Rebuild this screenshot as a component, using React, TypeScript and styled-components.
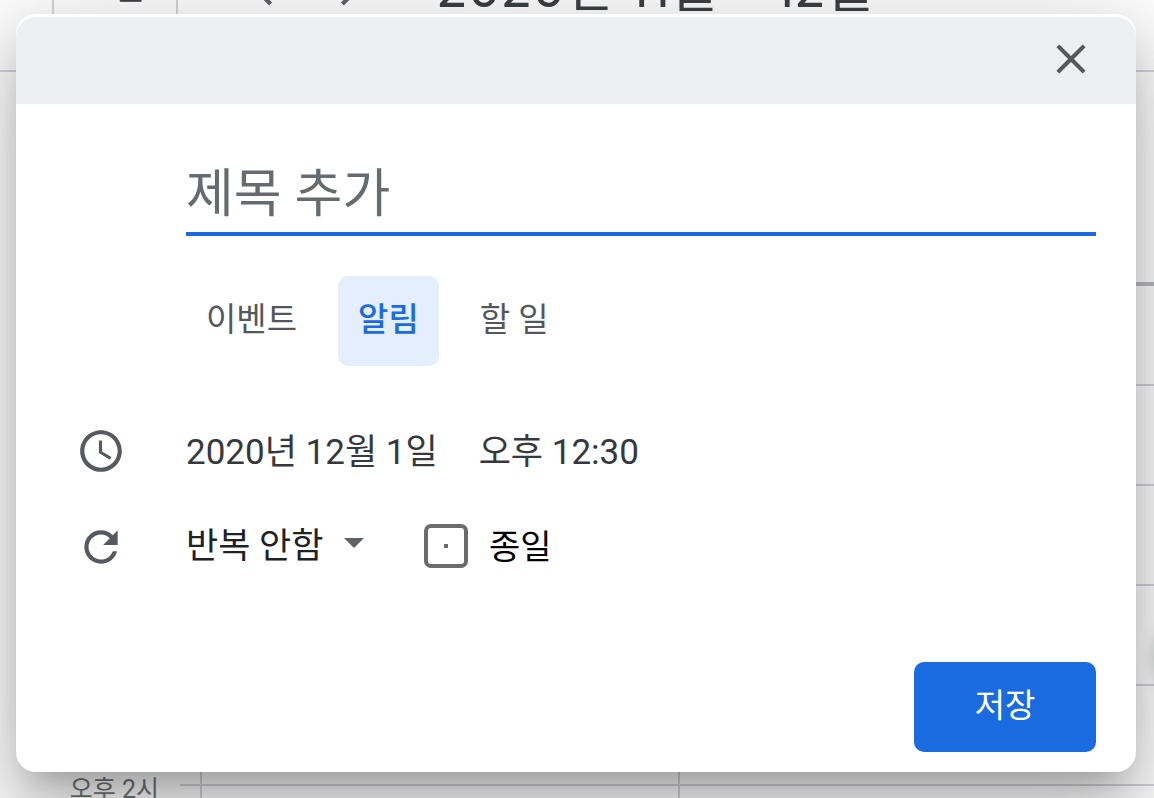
import React from "react";
import styled, { createGlobalStyle } from "styled-components";

const GlobalStyle = createGlobalStyle`
  *, *::before, *::after { box-sizing: border-box; }
  body {
    margin: 0;
    background: #fff;
    font-family: Roboto, "Noto Sans CJK KR", sans-serif;
  }
  button, input, select { font-family: inherit; }
`;

const Page = styled.div`
  position: relative;
  height: 100vh;
  overflow: hidden;
`;

/* ---------- calendar behind the dialog ---------- */

const Calendar = styled.main`
  margin-top: -96px;
`;

const CalendarHeader = styled.header`
  display: flex;
  align-items: center;
  height: 168px;
  padding-left: 52px;
  border-bottom: 2px solid #d3d5da;
  color: #3c4043;
`;

const TodayButton = styled.button`
  width: 126px;
  height: 90px;
  padding: 0 0 4px;
  border: 2px solid #d3d5da;
  border-radius: 10px;
  background: transparent;
  color: #3c4043;
  font-size: 33px;
  font-weight: 500;
`;

const NavButtons = styled.div`
  display: flex;
  gap: 33px;
  margin: 0 63px 0 62px;
  padding-top: 12px;
`;

const NavButton = styled.button`
  display: grid;
  place-items: center;
  width: 50px;
  height: 50px;
  padding: 0;
  border: 0;
  background: none;
  color: #5f6368;
`;

const Period = styled.h1`
  margin: 0;
  padding-top: 4px;
  font-family: Inter, "Noto Sans CJK KR", sans-serif;
  font-size: 52px;
  font-weight: 400;
  line-height: 72px;
  white-space: nowrap;
`;

const DayHeads = styled.div`
  height: 214px;
  margin-left: 180px;
  border-bottom: 4px solid #bbbcbf;
`;

const Hour = styled.div`
  display: grid;
  grid-template-columns: 180px 20px 478px 1fr;
  height: 100px;
`;

const HourLabel = styled.span`
  align-self: end;
  padding-right: 21px;
  color: #70757a;
  font-size: 25px;
  line-height: 32px;
  text-align: right;
  margin-bottom: -20px;
`;

const Slot = styled.div<{ $divided?: boolean }>`
  border-bottom: 2px solid #d3d5da;
  border-left: ${(p) => (p.$divided ? "2px solid #d3d5da" : "0")};
`;

const CreateButton = styled.button`
  position: absolute;
  top: 610px;
  right: -96px;
  width: 92px;
  height: 92px;
  border: 0;
  border-radius: 46px;
  background: #fff;
  box-shadow: 0 2px 16px rgba(60, 64, 67, 0.5);
`;

/* ---------- dialog ---------- */

const Dialog = styled.form`
  position: absolute;
  top: 14px;
  right: 18px;
  left: 16px;
  padding-top: 3px;
  border-radius: 20px;
  background: #fff;
  box-shadow:
    0 48px 76px 6px rgba(0, 0, 0, 0.15),
    0 18px 92px 16px rgba(0, 0, 0, 0.14),
    0 22px 30px -14px rgba(0, 0, 0, 0.2);
`;

const DialogBar = styled.div`
  display: flex;
  justify-content: flex-end;
  align-items: center;
  height: 87px;
  padding: 0 40px 4px 0;
  border-radius: 20px 20px 0 0;
  background: #ecf0f1;
`;

const CloseButton = styled.button`
  display: grid;
  place-items: center;
  width: 50px;
  height: 50px;
  padding: 0;
  border: 0;
  background: none;
  color: #55595d;
`;

const Row = styled.div`
  display: grid;
  grid-template-columns: 170px 1fr;
  align-items: center;
  min-height: 96px;
  padding-right: 40px;
`;

const TitleRow = styled(Row)`
  padding-top: 40px;
`;

const TabRow = styled(Row)`
  padding: 40px 40px 37px 0;
`;

const IconCell = styled.span`
  display: grid;
  place-items: center;
  color: #565a60;
`;

const TitleInput = styled.input`
  grid-column: 2;
  width: 100%;
  height: 92px;
  padding: 12px 0 0;
  border: 0;
  border-bottom: 4px solid #1b6be0;
  outline: 0;
  background: none;
  color: #3c4043;
  font-size: 52px;
  &::placeholder { color: #656b6f; opacity: 1; }
`;

const Tabs = styled.div`
  grid-column: 2;
  display: flex;
  gap: 21px;
`;

const Tab = styled.button<{ $active?: boolean }>`
  height: 90px;
  padding: 0 20px 8px;
  border: 0;
  border-radius: 10px;
  background: ${(p) => (p.$active ? "#e4eefd" : "transparent")};
  color: ${(p) => (p.$active ? "#1b6be0" : "#54585d")};
  font-size: 33px;
  font-weight: ${(p) => (p.$active ? 500 : 400)};
`;

const Fields = styled.div<{ $gap: number }>`
  display: flex;
  align-items: center;
  gap: ${(p) => p.$gap}px;
`;

const DateButton = styled.button`
  padding: 4px 0 0;
  border: 0;
  background: none;
  color: #35393d;
  font-size: 35px;
  line-height: 50px;
`;

const SelectBox = styled.label`
  position: relative;
  display: flex;
  align-items: center;
  color: #5f6368;
`;

const Select = styled.select`
  appearance: none;
  width: 178px;
  height: 60px;
  padding: 0 0 2px;
  border: 0;
  background: none;
  color: #202124;
  font-size: 35px;
`;

const Arrow = styled.svg`
  position: absolute;
  top: 21px;
  right: 0;
  pointer-events: none;
`;

const CheckLabel = styled.label`
  display: flex;
  align-items: flex-start;
  gap: 21px;
  color: #000;
  font-size: 34px;
  line-height: 46px;
`;

const Checkbox = styled.input`
  appearance: none;
  display: grid;
  place-items: center;
  width: 44px;
  height: 44px;
  margin: 0;
  border: 4px solid #6b6b6b;
  border-radius: 7px;
  &::before {
    content: "";
    width: 4px;
    height: 4px;
    background: #6b6b6b;
  }
`;

const Actions = styled.div`
  display: flex;
  justify-content: flex-end;
  padding: 67px 40px 20px;
`;

const SaveButton = styled.button`
  width: 182px;
  height: 90px;
  padding: 0 0 8px;
  border: 0;
  border-radius: 10px;
  background: #1b6be0;
  color: #fff;
  font-size: 33px;
`;

const Icon = ({ d, size = 50 }: { d: string; size?: number }) => (
  <svg width={size} height={size} viewBox="0 0 24 24" fill="currentColor" aria-hidden="true">
    <path d={d} />
  </svg>
);

const hours = ["오전 10시", "오전 11시", "오후 12시", "오후 1시", "오후 2시"];

export default function App() {
  return (
    <>
      <GlobalStyle />
      <Page>
        <Calendar>
          <CalendarHeader>
            <TodayButton type="button">오늘</TodayButton>
            <NavButtons>
              <NavButton type="button" aria-label="이전">
                <Icon d="M15.41 7.41 14 6l-6 6 6 6 1.41-1.41L10.83 12z" />
              </NavButton>
              <NavButton type="button" aria-label="다음">
                <Icon d="M10 6 8.59 7.41 13.17 12l-4.58 4.59L10 18l6-6z" />
              </NavButton>
            </NavButtons>
            <Period>2020년 11월 – 12월</Period>
          </CalendarHeader>
          <DayHeads />
          {hours.map((hour) => (
            <Hour key={hour}>
              <HourLabel>{hour}</HourLabel>
              <Slot />
              <Slot $divided />
              <Slot $divided />
            </Hour>
          ))}
          <Hour>
            <span />
            <Slot />
            <Slot $divided />
            <Slot $divided />
          </Hour>
        </Calendar>
        <CreateButton type="button" aria-label="만들기" />
        <Dialog onSubmit={(e) => e.preventDefault()}>
          <DialogBar>
            <CloseButton type="button" aria-label="닫기">
              <Icon d="M19 6.41 17.59 5 12 10.59 6.41 5 5 6.41 10.59 12 5 17.59 6.41 19 12 13.41 17.59 19 19 17.59 13.41 12z" />
            </CloseButton>
          </DialogBar>
          <TitleRow>
            <TitleInput type="text" placeholder="제목 추가" aria-label="제목 추가" />
          </TitleRow>
          <TabRow>
            <Tabs>
              <Tab type="button">이벤트</Tab>
              <Tab type="button" $active>알림</Tab>
              <Tab type="button">할 일</Tab>
            </Tabs>
          </TabRow>
          <Row>
            <IconCell>
              <Icon d="M11.99 2C6.47 2 2 6.48 2 12s4.47 10 9.99 10C17.52 22 22 17.52 22 12S17.52 2 11.99 2zM12 20c-4.42 0-8-3.58-8-8s3.58-8 8-8 8 3.58 8 8-3.58 8-8 8zM12.5 7H11v6l5.25 3.15.75-1.23-4.5-2.67z" />
            </IconCell>
            <Fields $gap={41}>
              <DateButton type="button">2020년 12월 1일</DateButton>
              <DateButton type="button">오후 12:30</DateButton>
            </Fields>
          </Row>
          <Row>
            <IconCell>
              <Icon d="M17.65 6.35C16.2 4.9 14.21 4 12 4c-4.42 0-7.99 3.58-7.99 8s3.57 8 7.99 8c3.73 0 6.84-2.55 7.73-6h-2.08c-.82 2.33-3.04 4-5.65 4-3.31 0-6-2.69-6-6s2.69-6 6-6c1.66 0 3.14.69 4.22 1.78L13 11h7V4l-2.35 2.35z" />
            </IconCell>
            <Fields $gap={60}>
              <SelectBox>
                <Select aria-label="반복">
                  <option>반복 안함</option>
                </Select>
                <Arrow width="20" height="10" viewBox="0 0 20 10" fill="currentColor" aria-hidden="true">
                  <path d="M0 0h20L10 10z" />
                </Arrow>
              </SelectBox>
              <CheckLabel>
                <Checkbox type="checkbox" />
                종일
              </CheckLabel>
            </Fields>
          </Row>
          <Actions>
            <SaveButton type="submit">저장</SaveButton>
          </Actions>
        </Dialog>
      </Page>
    </>
  );
}
